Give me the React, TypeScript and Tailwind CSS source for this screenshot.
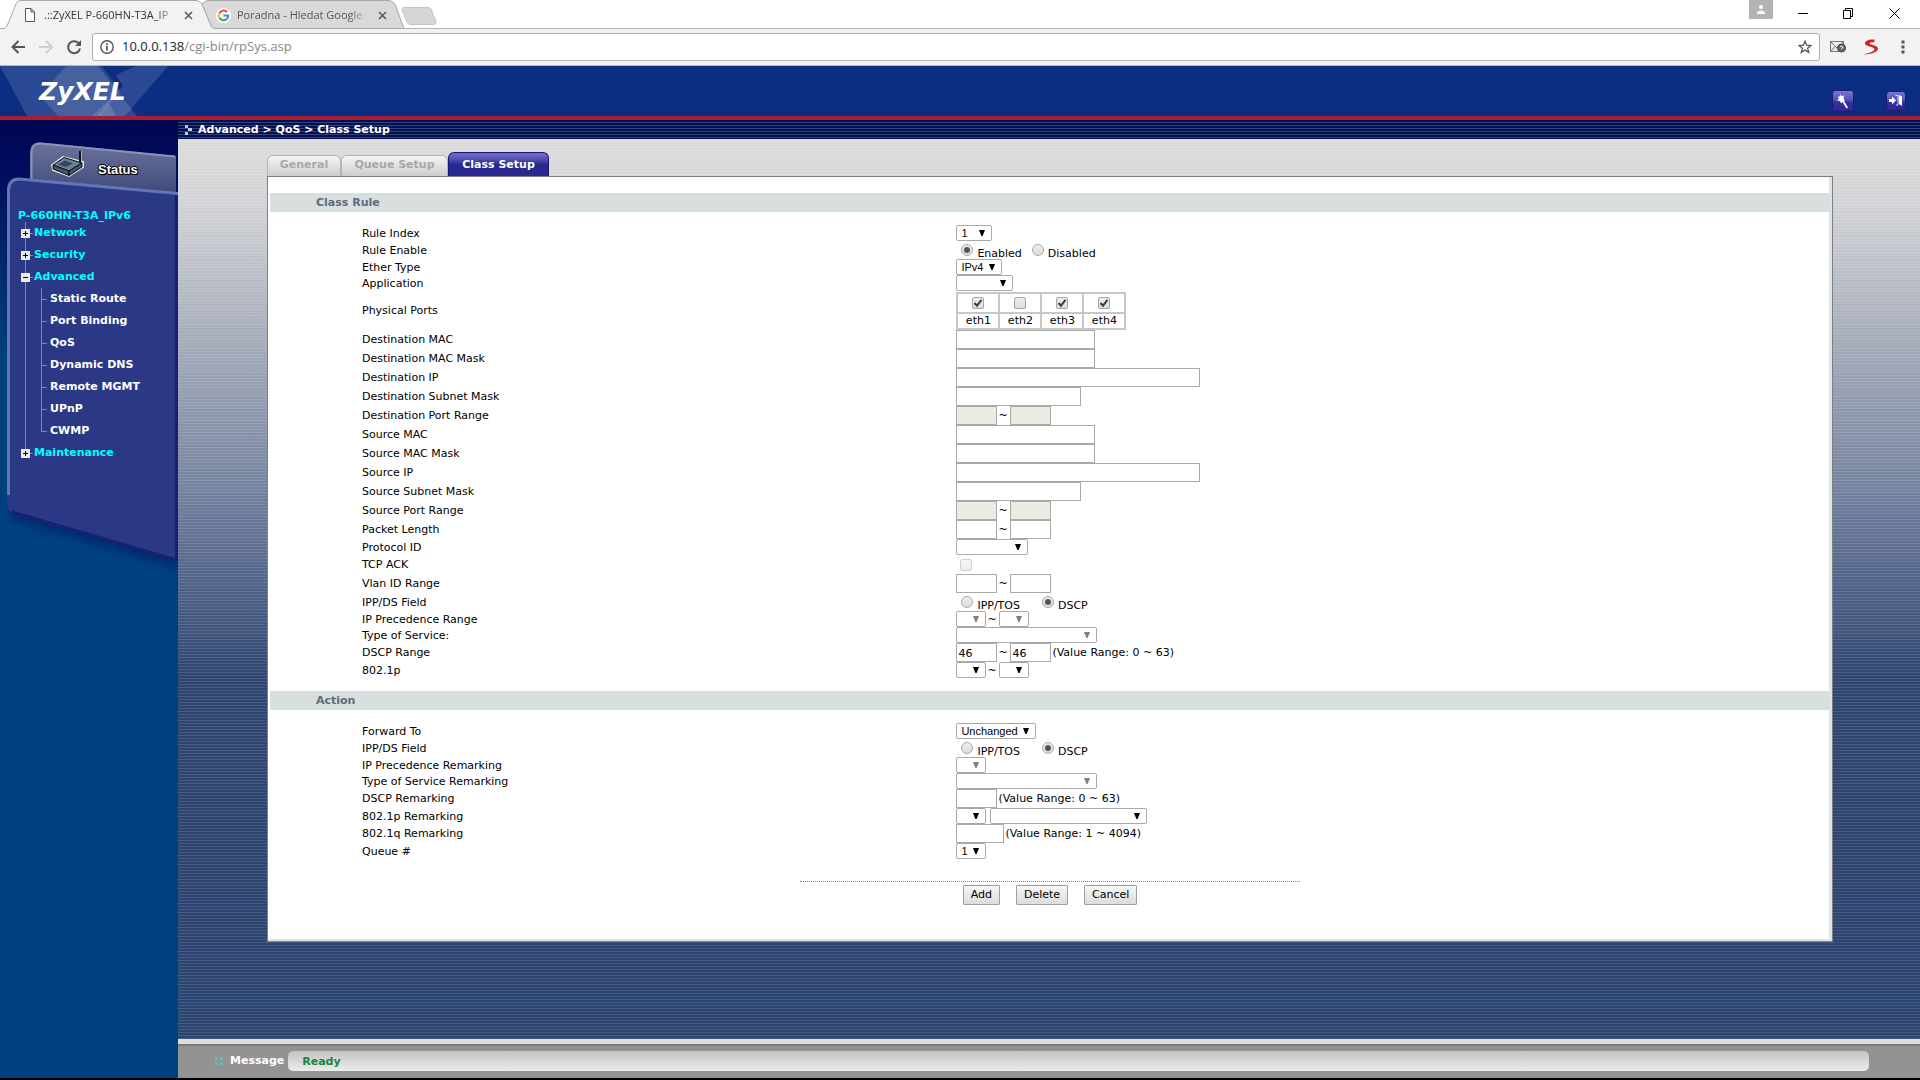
import type { ReactNode } from "react";
import clsx from "clsx";

const menu = [
  { label: "Network", open: false, items: [] },
  { label: "Security", open: false, items: [] },
  {
    label: "Advanced",
    open: true,
    items: ["Static Route", "Port Binding", "QoS", "Dynamic DNS", "Remote MGMT", "UPnP", "CWMP"],
  },
  { label: "Maintenance", open: false, items: [] },
];

const ports = [
  { name: "eth1", checked: true },
  { name: "eth2", checked: false },
  { name: "eth3", checked: true },
  { name: "eth4", checked: true },
];

/* ---------- form controls ---------- */

function Row({ label, htmlFor, className = "h-4", children }: { label: string; htmlFor?: string; className?: string; children: ReactNode }) {
  return (
    <div className={clsx("grid grid-cols-[44%_1fr] items-center", className)}>
      <label htmlFor={htmlFor} className="pl-[92px] pt-px leading-3">
        {label}
      </label>
      <div className="flex h-full items-center">{children}</div>
    </div>
  );
}

function Text({ id, width = "w-[41px]", value = "", disabled = false }: { id: string; width?: string; value?: string; disabled?: boolean }) {
  return (
    <input
      id={id}
      aria-label={id}
      type="text"
      defaultValue={value}
      disabled={disabled}
      className={clsx("h-[19px] border border-[#a9a9a9] px-px pt-px leading-3", width, disabled ? "bg-[#ebebe4]" : "bg-white")}
    />
  );
}

function Select({ id, width = "w-[30px]", value = "", disabled = false }: { id: string; width?: string; value?: string; disabled?: boolean }) {
  return (
    <span className={clsx("relative inline-block h-4", width)}>
      <select
        id={id}
        aria-label={id}
        disabled={disabled}
        className="block h-4 w-full appearance-none rounded-[2px] border border-[#a9a9a9] bg-white pl-1 font-['Liberation_Sans',Arial,sans-serif] text-[11px] leading-[14px] opacity-100"
      >
        <option>{value}</option>
      </select>
      <svg viewBox="0 0 6 6" className={clsx("pointer-events-none absolute right-[7px] top-[5px] size-[6px]", disabled ? "fill-[#808080]" : "fill-black")}>
        <path d="M0 0H6L3.6 6H2.4Z" />
      </svg>
    </span>
  );
}

function Radio({ name, label, checked = false }: { name: string; label: string; checked?: boolean }) {
  return (
    <label className="flex h-full items-end gap-1">
      <span className="relative mb-[3px] block size-3">
        <input
          type="radio"
          name={name}
          defaultChecked={checked}
          className="peer block size-3 appearance-none rounded-full border border-[#aaa] bg-linear-to-b from-[#eee] to-[#dcdcdc]"
        />
        <span className="pointer-events-none absolute inset-[3px] hidden rounded-full bg-[#555] peer-checked:block" />
      </span>
      <span className="leading-[11px]">{label}</span>
    </label>
  );
}

function Check({ id, checked = false, disabled = false }: { id: string; checked?: boolean; disabled?: boolean }) {
  return (
    <span className={clsx("relative block size-3", disabled && "opacity-50")}>
      <input
        id={id}
        aria-label={id}
        type="checkbox"
        defaultChecked={checked}
        disabled={disabled}
        className="peer block size-3 appearance-none rounded-[2px] border border-[#a5a5a5] bg-linear-to-b from-[#eee] to-[#dcdcdc]"
      />
      <svg viewBox="0 0 12 12" className="pointer-events-none absolute inset-0 hidden size-3 fill-none stroke-[#3d3d3d] stroke-2 peer-checked:block">
        <path d="M2.5 6L5 8.7L9.5 2.8" />
      </svg>
    </span>
  );
}

function Tilde() {
  return <span className="w-[13px] pl-px pt-px leading-3">~</span>;
}

function SectionTitle({ children }: { children: ReactNode }) {
  return <h2 className="mb-[13px] h-[19px] bg-[#d8e0df] pl-[46px] pt-px text-[11px] font-bold leading-[18px] text-[#5f6a80]">{children}</h2>;
}

function FieldRadios({ name }: { name: string }) {
  return (
    <Row label="IPP/DS Field" className="h-[18px]">
      <div className="flex h-full gap-[22px] pl-[5px]">
        <Radio name={name} label="IPP/TOS" />
        <Radio name={name} label="DSCP" checked />
      </div>
    </Row>
  );
}

/* ---------- browser frame ---------- */

function BrowserTabs() {
  return (
    <div className="relative flex h-7 items-center bg-white font-['Open_Sans','Noto_Sans',sans-serif] text-[11px] text-[#333]">
      <svg width="440" height="29" viewBox="0 0 440 29" className="absolute left-0 top-0 z-10">
        <path d="M0 28.5H440" stroke="#b4b4b4" />
        <path d="M202 4Q204 1 208 .5H389Q393 1 395 4L404 28.5H212Z" fill="#d9d9d9" stroke="#a8a8a8" />
        <path d="M0 28.5H4Q6 28 7 26L16 4Q17 .5 21 .5H196Q200 .5 202 4L211 26Q212 28.5 215 28.5V30H0Z" fill="#f2f2f2" />
        <path d="M0 28.5H4Q6 28 7 26L16 4Q17 .5 21 .5H196Q200 .5 202 4L211 26Q212 28.5 215 28.5" fill="none" stroke="#a8a8a8" />
        <path d="M404 7.5H428Q430 7.500 431 9L436 22Q436 24 434 24.500H410Q408 24 407 22L402 10Q402 8 404 7.500Z" fill="#d6d6d6" stroke="#c4c4c4" />
      </svg>
      <div className="relative z-20 flex w-[212px] items-center pl-6 pt-[2px]">
        <svg width="12" height="14" viewBox="0 0 12 14" fill="#fff" stroke="#555">
          <path d="M1.500 .5H7L10.500 4V13.500H1.500ZM7 .5V4H10.500" />
        </svg>
        <span className="ml-2 w-[132px] whitespace-nowrap mask-r-from-85%">.::ZyXEL P-660HN-T3A_IP</span>
        <button aria-label="Close tab" className="ml-2">
          <TabCross />
        </button>
      </div>
      <div className="relative z-20 flex w-48 items-center pl-1 pt-[2px] text-[#555]">
        <svg width="15" height="15" viewBox="0 0 15 15" fill="none" strokeWidth="2">
          <circle cx="7.500" cy="7.500" r="7.500" fill="#fff" />
          <path d="M11 4A4.800 4.800 0 0 0 3.300 5.200" stroke="#e94335" />
          <path d="M3.300 5.200A4.800 4.800 0 0 0 3.300 9.800" stroke="#fbbc05" />
          <path d="M3.300 9.800A4.800 4.800 0 0 0 10.800 11" stroke="#34a853" />
          <path d="M10.800 11A4.800 4.800 0 0 0 12.300 7.500H7.500" stroke="#4285f4" />
        </svg>
        <span className="ml-[6px] w-[132px] whitespace-nowrap mask-r-from-85%">Poradna - Hledat Google</span>
        <button aria-label="Close tab" className="ml-[9px]">
          <TabCross />
        </button>
      </div>
      <div className="ml-auto flex h-full items-start pr-5 text-black">
        <button aria-label="Profile" className="grid h-[19px] w-6 place-items-center bg-[#b3b3b3]">
          <svg width="8" height="9" viewBox="0 0 8 9" fill="#fff">
            <circle cx="4" cy="2" r="2" />
            <path d="M0 9V7.500Q1 5.500 4 5.500T8 7.500V9Z" />
          </svg>
        </button>
        <svg width="102" height="11" viewBox="0 0 102 11" fill="none" stroke="#000" className="ml-[25px] mt-2">
          <path d="M0 5.500H10M45.500 2.500H52.500V10.500H45.500ZM47.500 2.500V.5H54.500V8.500H52.500M91.500 .5L101.500 10.500M101.500 .5L91.500 10.500" />
        </svg>
      </div>
    </div>
  );
}

function TabCross() {
  return (
    <svg width="9" height="9" viewBox="0 0 9 9" stroke="#5a5a5a" strokeWidth="1.600">
      <path d="M1 1L8 8M8 1L1 8" />
    </svg>
  );
}

function Toolbar() {
  return (
    <div className="flex h-[38px] items-center border-b border-t border-b-[#b6b4b6] border-t-[#b4b4b4] bg-[#f2f2f2] pl-[11px] pr-[15px]">
      <svg width="72" height="16" viewBox="0 0 72 16" fill="none" strokeWidth="2" stroke="#555">
        <path d="M14 8H2M7.500 2L1.500 8L7.500 14" />
        <path d="M28 8H40M35 2L41 8L35 14" stroke="#d0d0d0" />
        <path d="M67.500 4A6 6 0 1 0 69 9.500" />
        <path d="M70 1V7H64Z" fill="#555" stroke="none" />
      </svg>
      <div className="ml-[9px] flex h-7 flex-1 items-center rounded-[3px] border border-[#b0b0b0] bg-white pl-[7px] pr-[7px]">
        <svg width="14" height="14" viewBox="0 0 14 14" fill="none" stroke="#555" strokeWidth="1.400">
          <circle cx="7" cy="7" r="6.200" />
          <path d="M7 6V10.500M7 3.300V4.900" strokeWidth="1.800" />
        </svg>
        <p className="ml-2 font-['Open_Sans','Noto_Sans',sans-serif] text-[13px] text-[#888]">
          <span className="text-[#222]">10.0.0.138</span>/cgi-bin/rpSys.asp
        </p>
        <svg width="14" height="14" viewBox="0 0 14 14" fill="none" stroke="#555" strokeWidth="1.300" className="ml-auto">
          <path d="M7 1.300L8.600 5.200L12.900 5.500L9.600 8.200L10.700 12.400L7 10.100L3.300 12.400L4.400 8.200L1.100 5.500L5.400 5.200Z" />
        </svg>
      </div>
      <svg width="16" height="14" viewBox="0 0 16 14" fill="none" className="ml-[10px]">
        <path d="M.5 1.500H13.500V11.500H.5ZM.5 1.500L7 8L13.500 1.500M.5 11.500L5 6.500" fill="#e8e8e8" stroke="#777" />
        <circle cx="11.500" cy="8" r="4" fill="#666" stroke="#444" />
        <path d="M10 7Q11.500 5 13 7L11.500 9" stroke="#fff" />
      </svg>
      <svg width="16" height="16" viewBox="0 0 16 16" className="ml-[17px]">
        <path d="M11.500 .5C5 0 1.500 2.500 2 5C2.500 7.500 11.500 7.500 11.500 10.500C10.500 13 5 14.500 -.5 15.300C7 15.500 15 13.500 15 9.500C14.500 6 6.500 6 6.500 4.300C7 3 9 3.500 11.500 3Z" fill="#d9201f" />
      </svg>
      <svg width="4" height="14" viewBox="0 0 4 14" fill="#555" className="ml-[22px]">
        <path d="M.5 .5h3v3h-3ZM.5 5.500h3v3h-3ZM.5 10.500h3v3h-3Z" />
      </svg>
    </div>
  );
}

/* ---------- router page ---------- */

function Banner() {
  return (
    <header className="relative flex h-[54px] items-start border-b-4 border-[#a91d35] bg-[#0c2e82]">
      <svg width="180" height="50" viewBox="0 0 180 50" fill="#fff" className="absolute left-0 top-0">
        <path d="M0 0H98L137 50H27Z" opacity=".13" />
        <path d="M66 0H102L120 25L100 50H58L40 30Z" opacity=".13" />
        <path d="M136 0H168L125 50H92L123 20L116 9Z" opacity=".13" />
        <path d="M98 50L109 37L116 50Z" opacity=".15" />
      </svg>
      <h1 className="relative pl-[39px] pt-2 font-['DejaVu_Sans',Verdana,sans-serif] text-[25px] font-bold italic leading-9 text-white">ZyXEL</h1>
      <div className="relative ml-auto flex items-center gap-8 pr-[14px] pt-6">
        <button aria-label="Wizard">
          <svg width="22" height="22" viewBox="0 0 22 22">
            <IconPlate size={22} />
            <path d="M8.500 3.500L9 6L12 5.500L11.500 8.500L13 10.500L12 11L16 17.500L14.500 18.500L10.500 12L9 13.500L8 11L5 10.500L7 8.500L6 6.500L8 6.500Z" fill="#fff" />
          </svg>
        </button>
        <button aria-label="Logout">
          <svg width="20" height="20" viewBox="0 0 20 20">
            <IconPlate size={20} />
            <path d="M3 8H6V5.500L10 9.500L6 13.500V11H3ZM13 4L16 5.500V15L13 13Z" fill="#fff" />
            <path d="M9.500 4.500H12V14H10" fill="none" stroke="#fff" opacity=".8" />
          </svg>
        </button>
      </div>
    </header>
  );
}

function IconPlate({ size }: { size: number }) {
  return (
    <>
      <defs>
        <linearGradient id="plate" x1="0" y1="0" x2="0" y2="1">
          <stop offset="0" stopColor="#7c7ad6" />
          <stop offset=".45" stopColor="#5452b4" />
          <stop offset=".55" stopColor="#34329a" />
          <stop offset="1" stopColor="#2a2890" />
        </linearGradient>
      </defs>
      <rect x=".5" y=".5" width={size - 1} height={size - 1} rx="3" fill="url(#plate)" stroke="#1f1c70" />
    </>
  );
}

function SidebarArt() {
  return (
    <svg width="178" height="460" viewBox="0 0 178 460" fill="none" className="absolute left-0 top-0">
      <defs>
        <linearGradient id="statusTab" x1="0" y1="0" x2="0" y2="1">
          <stop offset="0" stopColor="#6c7499" />
          <stop offset="1" stopColor="#3d487c" />
        </linearGradient>
        <filter id="soft" x="-10%" y="-10%" width="120%" height="120%">
          <feGaussianBlur stdDeviation="4" />
        </filter>
      </defs>
      <path d="M12 60V398L178 447V60Z" fill="#00104f" opacity=".5" filter="url(#soft)" />
      <path d="M30 75V33Q30 22 40 22.500L176 36V75Z" fill="url(#statusTab)" />
      <path d="M31.500 60V33Q31.500 23 41 23.500L175 36.500" stroke="#8a93b4" strokeWidth="2" />
      <path d="M7 71Q7 58 18 58L178 73V441L13 394Q7 392 7 380Z" fill="#2b3885" />
      <path d="M8.500 375V71Q8.500 59 19 59L178 73.500" stroke="#6475b6" strokeWidth="3" />
      <path d="M12 392L176.500 440V75" stroke="#191f75" strokeWidth="3" />
      {/* router */}
      <path d="M52 45L63 37L83 42V47L69 56L53 50Z" fill="#c8d0cf" stroke="#dfe4e0" strokeWidth="2" />
      <path d="M53 45L64 37.500L82 43L69 51Z" fill="#677f99" stroke="#111" />
      <path d="M53 45V49L69 55.500V51ZM69 55.500L82 47V43L69 51Z" fill="#40566f" stroke="#111" />
      <path d="M58 44.500L65 40.500L73 43.500L66 47Z" fill="#34465f" />
      <path d="M80 42V31" stroke="#111" strokeWidth="2" />
      <path d="M81.500 41V31" stroke="#a8b0b8" />
    </svg>
  );
}

function Sidebar() {
  return (
    <aside className="relative w-[178px] shrink-0 bg-[#004080] bg-[linear-gradient(#000852,#000a5c_40px,#004080_230px)]">
      <SidebarArt />
      <nav aria-label="Main menu" className="relative pt-10 text-[11px] font-bold">
        <a href="#status" className="block pl-[98px] font-['Liberation_Sans',Arial,sans-serif] text-[13px] leading-5 text-white [text-shadow:-1px_0_#000,1px_0_#000,0_-1px_#000,0_1px_#000,1px_1px_#000]">
          Status
        </a>
        <p className="mt-7 pl-[18px] leading-4 text-[#0ff]">P-660HN-T3A_IPv6</p>
        <ul className="relative -mt-[2px]">
          <li aria-hidden className="absolute left-[25px] top-0 h-[231px] w-px bg-[#7d86b8]" />
          {menu.map((group) => (
            <li key={group.label}>
              <a href={"#" + group.label} className="relative flex h-[22px] items-center pl-[21px] text-[#0ff]">
                <svg width="9" height="9" viewBox="0 0 9 9">
                  <path d="M0 0H9V9H0Z" fill="#eceadf" />
                  <path d="M2 4.500H7" stroke="#000" />
                  {!group.open && <path d="M4.500 2V7" stroke="#000" />}
                </svg>
                <span className="mr-px h-px w-[3px] bg-[#7d86b8]" />
                {group.label}
              </a>
              {group.items.length > 0 && (
                <ul className="relative">
                  <li aria-hidden className="absolute left-[41px] top-0 h-[143px] w-px bg-[#7d86b8]" />
                  {group.items.map((item) => (
                    <li key={item}>
                      <a href={"#" + item} className="flex h-[22px] items-center pl-[41px] text-white">
                        <span className="mr-[3px] h-px w-[6px] bg-[#7d86b8]" />
                        {item}
                      </a>
                    </li>
                  ))}
                </ul>
              )}
            </li>
          ))}
        </ul>
      </nav>
    </aside>
  );
}

function PageTabs() {
  const idle = "h-[21px] rounded-t-md border border-b-0 border-[#b4b4b4] bg-linear-to-b from-[#f6f6f6] to-[#cdcdcd] pb-[2px] text-[#a8a8a8]";
  return (
    <div className="flex items-end text-[11px] font-bold leading-3">
      <button className={clsx(idle, "w-[74px]")}>General</button>
      <button className={clsx(idle, "w-[107px]")}>Queue Setup</button>
      <button className="h-6 w-[101px] rounded-t-md border border-b-0 border-[#1a1878] bg-linear-to-b from-[#6a68c0] from-10% via-[#4543a4] via-35% to-[#292891] to-50% text-white">
        Class Setup
      </button>
    </div>
  );
}

function ClassRule() {
  return (
    <section>
      <SectionTitle>Class Rule</SectionTitle>
      <Row label="Rule Index" htmlFor="ruleIndex">
        <Select id="ruleIndex" width="w-9" value="1" />
      </Row>
      <Row label="Rule Enable" className="h-[18px]">
        <div className="flex h-full gap-[10px] pl-[5px]">
          <Radio name="ruleEnable" label="Enabled" checked />
          <Radio name="ruleEnable" label="Disabled" />
        </div>
      </Row>
      <Row label="Ether Type" htmlFor="etherType">
        <Select id="etherType" width="w-[46px]" value="IPv4" />
      </Row>
      <Row label="Application" htmlFor="application">
        <Select id="application" width="w-[57px]" />
      </Row>
      <Row label="Physical Ports" className="h-[39px]">
        <table className="border-collapse border-2 border-[#c8c8c8] text-center leading-3">
          <tbody>
            <tr>
              {ports.map((port) => (
                <td key={port.name} className="h-5 w-[42px] border-2 border-[#c8c8c8] pl-[14px]">
                  <Check id={port.name} checked={port.checked} />
                </td>
              ))}
            </tr>
            <tr>
              {ports.map((port) => (
                <td key={port.name} className="h-4 border-2 border-[#c8c8c8]">
                  <label htmlFor={port.name} className="block">
                    {port.name}
                  </label>
                </td>
              ))}
            </tr>
          </tbody>
        </table>
      </Row>
      {["Destination", "Source"].map((side) => (
        <div key={side}>
          <Row label={side + " MAC"} htmlFor={side + "Mac"} className="h-[19px]">
            <Text id={side + "Mac"} width="w-[139px]" />
          </Row>
          <Row label={side + " MAC Mask"} htmlFor={side + "MacMask"} className="h-[19px]">
            <Text id={side + "MacMask"} width="w-[139px]" />
          </Row>
          <Row label={side + " IP"} htmlFor={side + "Ip"} className="h-[19px]">
            <Text id={side + "Ip"} width="w-[244px]" />
          </Row>
          <Row label={side + " Subnet Mask"} htmlFor={side + "Subnet"} className="h-[19px]">
            <Text id={side + "Subnet"} width="w-[125px]" />
          </Row>
          <Row label={side + " Port Range"} htmlFor={side + "PortFrom"} className="h-[19px]">
            <Text id={side + "PortFrom"} disabled />
            <Tilde />
            <Text id={side + "PortTo"} disabled />
          </Row>
        </div>
      ))}
      <Row label="Packet Length" htmlFor="lengthFrom" className="h-[19px]">
        <Text id="lengthFrom" />
        <Tilde />
        <Text id="lengthTo" />
      </Row>
      <Row label="Protocol ID" htmlFor="protocol">
        <Select id="protocol" width="w-[72px]" />
      </Row>
      <Row label="TCP ACK" htmlFor="tcpAck" className="h-[19px]">
        <div className="pl-1">
          <Check id="tcpAck" disabled />
        </div>
      </Row>
      <Row label="Vlan ID Range" htmlFor="vlanFrom" className="h-[19px]">
        <Text id="vlanFrom" />
        <Tilde />
        <Text id="vlanTo" />
      </Row>
      <FieldRadios name="ruleField" />
      <Row label="IP Precedence Range" htmlFor="precedenceFrom">
        <Select id="precedenceFrom" disabled />
        <Tilde />
        <Select id="precedenceTo" disabled />
      </Row>
      <Row label="Type of Service:" htmlFor="service">
        <Select id="service" width="w-[141px]" disabled />
      </Row>
      <Row label="DSCP Range" htmlFor="dscpFrom" className="h-[19px]">
        <Text id="dscpFrom" value="46" />
        <Tilde />
        <Text id="dscpTo" value="46" />
        <span className="pl-px pt-px">(Value Range: 0 ~ 63)</span>
      </Row>
      <Row label="802.1p" htmlFor="dot1pFrom">
        <Select id="dot1pFrom" />
        <Tilde />
        <Select id="dot1pTo" />
      </Row>
    </section>
  );
}

function Action() {
  return (
    <section className="mt-[13px]">
      <SectionTitle>Action</SectionTitle>
      <Row label="Forward To" htmlFor="forwardTo">
        <Select id="forwardTo" width="w-20" value="Unchanged" />
      </Row>
      <FieldRadios name="actionField" />
      <Row label="IP Precedence Remarking" htmlFor="precedenceMark">
        <Select id="precedenceMark" disabled />
      </Row>
      <Row label="Type of Service Remarking" htmlFor="serviceMark">
        <Select id="serviceMark" width="w-[141px]" disabled />
      </Row>
      <Row label="DSCP Remarking" htmlFor="dscpMark" className="h-[19px]">
        <Text id="dscpMark" />
        <span className="pl-px pt-px">(Value Range: 0 ~ 63)</span>
      </Row>
      <Row label="802.1p Remarking" htmlFor="dot1pMark">
        <div className="flex gap-1">
          <Select id="dot1pMark" />
          <Select id="dot1pMarkName" width="w-[157px]" />
        </div>
      </Row>
      <Row label="802.1q Remarking" htmlFor="dot1qMark" className="h-[19px]">
        <Text id="dot1qMark" width="w-12" />
        <span className="pl-px pt-px">(Value Range: 1 ~ 4094)</span>
      </Row>
      <Row label="Queue #" htmlFor="queue">
        <Select id="queue" value="1" />
      </Row>
    </section>
  );
}

function Buttons() {
  return (
    <div className="mx-auto mt-[22px] flex w-[500px] justify-center gap-4 border-t border-dotted border-[#888] pt-[3px]">
      {["Add", "Delete", "Cancel"].map((name) => (
        <button key={name} className="h-5 rounded-[1px] border border-[#a0a0a0] bg-linear-to-b from-[#f6f6f6] to-[#dcdcdc] px-[7px] leading-3">
          {name}
        </button>
      ))}
    </div>
  );
}

function MessageBar() {
  return (
    <footer className="flex h-[39px] items-center border-t-[5px] border-[#dcdcdc] bg-[#939393] pl-[37px] pr-[51px] text-[11px] font-bold shadow-[inset_0_2px_#7c7c7c]">
      <svg width="8" height="8" viewBox="0 0 8 8" fill="#62bdb8">
        <path d="M0 0h3v3H0ZM5 0h3v3H5ZM0 5h3v3H0ZM5 5h3v3H5Z" />
      </svg>
      <span className="ml-[7px] text-white">Message</span>
      <output className="ml-1 h-5 flex-1 rounded-[5px] bg-linear-to-b from-[#c4c4c4] to-[#ececec] pl-[14px] pt-px leading-5 text-[#16873c]">Ready</output>
    </footer>
  );
}

export default function App() {
  return (
    <div className="flex min-h-screen flex-col bg-black font-['DejaVu_Sans',Verdana,sans-serif] text-[11px] text-black">
      <BrowserTabs />
      <Toolbar />
      <Banner />
      <div className="mb-[2px] flex flex-1">
        <Sidebar />
        <div className="flex min-w-0 flex-1 flex-col">
          <div className="flex h-[19px] items-center bg-[repeating-linear-gradient(#03104f_0_2px,#33427a_2px_3px)] pl-[7px] pt-px text-[11px] font-bold text-white">
            <svg width="7" height="10" viewBox="0 0 7 10" fill="#c3c8dc">
              <path d="M0 0h3v3H0ZM3 3h4v3H3ZM0 7h3v3H0Z" />
            </svg>
            <span className="ml-[6px]">Advanced &gt; QoS &gt; Class Setup</span>
          </div>
          <main className="flex-1 bg-[repeating-linear-gradient(transparent_0_2px,rgba(255,255,255,0.12)_2px_3px),linear-gradient(#dcdcdc,#d2d3d6_7%,#b2b7c1_18%,#7785a0_38%,#52648a_49%,#2f456f_60%,#2b446f)] pb-24 pl-[89px] pr-[87px] pt-[13px]">
            <PageTabs />
            <div className="border border-[#7c7f84] bg-white px-[2px] pb-9 pt-4 shadow-[inset_-3px_-2px_#dfe3e3]">
              <ClassRule />
              <Action />
              <Buttons />
            </div>
          </main>
          <MessageBar />
        </div>
      </div>
    </div>
  );
}
